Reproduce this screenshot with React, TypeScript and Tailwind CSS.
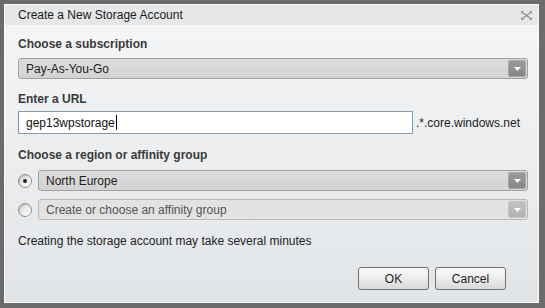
const font = "font-['Liberation_Sans',Arial,sans-serif]";

function Arrow({ disabled }: { disabled?: boolean }) {
  return (
    <span
      className={`mr-[1px] flex h-[17px] w-[18px] items-center justify-center rounded-[2px] border ${
        disabled
          ? "border-[#c4c4c4] bg-gradient-to-b from-[#c2c2c2] to-[#b2b2b2]"
          : "border-[#a6a6a6] bg-gradient-to-b from-[#9c9c9c] to-[#858585]"
      }`}
    >
      <svg width="7" height="4" viewBox="0 0 7 4">
        <path d="M0 0h7L3.5 4z" fill="#fff" />
      </svg>
    </span>
  );
}

function Select({ value, disabled }: { value: string; disabled?: boolean }) {
  return (
    <div
      className={`flex h-[21px] flex-1 items-center justify-between rounded-[3px] border pl-[7px] text-[12px] ${
        disabled
          ? "border-[#b8b8b8] bg-[#e2e2e2] text-[#555]"
          : "border-[#a0a0a0] bg-gradient-to-b from-[#dcdcdc] to-[#d3d3d3] text-[#1e1e1e]"
      }`}
    >
      <span>{value}</span>
      <Arrow disabled={disabled} />
    </div>
  );
}

function Radio({ checked }: { checked?: boolean }) {
  return (
    <span className="flex h-[14px] w-[14px] shrink-0 items-center justify-center rounded-full border border-[#8e8e8e] bg-gradient-to-br from-[#d9d9d9] to-[#ffffff] shadow-[inset_1px_1px_1px_rgba(0,0,0,0.15)]">
      {checked && <span className="h-[4px] w-[4px] rounded-full bg-[#222]" />}
    </span>
  );
}

function Button({ label }: { label: string }) {
  return (
    <button className="h-[23px] w-[71px] rounded-[3px] border border-[#6f6f6f] bg-gradient-to-b from-[#fafafa] via-[#ececec] to-[#d9d9d9] text-[12px] text-[#1e1e1e]">
      {label}
    </button>
  );
}

export default function App() {
  return (
    <div className={`h-[308px] w-[545px] bg-[#6b6b6b] pb-[5px] pl-[4px] pr-[6px] pt-[4px] ${font}`}>
      <div className="flex h-full flex-col border border-[#fbfbfb]">
        {/* Title bar */}
        <div className="flex h-[20px] items-center justify-between bg-[#e5e7e9] pl-[13px] pr-[6px] text-[12px] text-[#1a1a1a]">
          <span>Create a New Storage Account</span>
          <svg width="11" height="9" viewBox="0 0 11 9" fill="none" stroke="#8c8c8c" strokeWidth="1.2">
            <path d="M1.5 1.5l8 6M9.5 1.5l-8 6" />
            <path d="M0.5 0.5h2M8.5 0.5h2M0.5 8.5h2M8.5 8.5h2M0.5 0.5v2M10.5 0.5v2M0.5 6.5v2M10.5 6.5v2" strokeWidth="1" />
          </svg>
        </div>

        {/* Body */}
        <div className="flex flex-1 flex-col bg-gradient-to-b from-[#f4f5f6] to-[#e2e5e8] pl-[13px] pr-[10px] pt-[11px]">
          <p className="text-[12px] leading-[16px] font-bold text-[#3a3a3a]">Choose a subscription</p>
          <div className="mt-[6px] flex">
            <Select value="Pay-As-You-Go" />
          </div>

          <p className="mt-[12px] text-[12px] leading-[16px] font-bold text-[#3a3a3a]">Enter a URL</p>
          <div className="mt-[4px] flex items-center gap-[3px]">
            <div className="flex h-[23px] w-[395px] items-center border border-[#7d9db5] bg-white pl-[7px] text-[12px] text-[#111]">
              <span>gep13wpstorage</span>
              <span className="ml-[1px] h-[15px] w-[1px] bg-black" />
            </div>
            <span className="text-[12px] text-[#222]">.*.core.windows.net</span>
          </div>

          <p className="mt-[13px] text-[12px] leading-[16px] font-bold text-[#3a3a3a]">Choose a region or affinity group</p>
          <div className="mt-[7px] flex items-center gap-[6px]">
            <Radio checked />
            <Select value="North Europe" />
          </div>
          <div className="mt-[8px] flex items-center gap-[6px]">
            <Radio />
            <Select value="Create or choose an affinity group" disabled />
          </div>

          <p className="mt-[13px] text-[12px] leading-[16px] text-[#222]">Creating the storage account may take several minutes</p>

          <div className="mt-[18px] mr-[22px] flex justify-end gap-[6px]">
            <Button label="OK" />
            <Button label="Cancel" />
          </div>
        </div>
      </div>
    </div>
  );
}
